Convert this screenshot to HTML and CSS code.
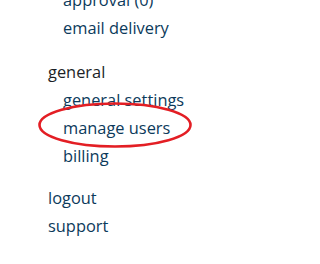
FILE: index.html
```html
<!DOCTYPE html>
<html>
<head>
<meta charset="utf-8">
<link rel="stylesheet" href="styles.css">
</head>
<body>
<nav class="menu">
  <ul class="sub">
    <li><a href="#">approval (0)</a></li>
    <li><a href="#">email delivery</a></li>
  </ul>
  <div class="section">
    <div class="heading">general</div>
    <ul class="sub">
      <li><a href="#">general settings</a></li>
      <li><a href="#">manage users</a></li>
      <li><a href="#">billing</a></li>
    </ul>
  </div>
  <ul class="top">
    <li><a href="#">logout</a></li>
    <li><a href="#">support</a></li>
  </ul>
</nav>
<svg class="circle" width="160" height="50" viewBox="0 0 160 50">
  <ellipse cx="78" cy="23" rx="75.5" ry="21.5" fill="none" stroke="#e31e24" stroke-width="2.6"/>
</svg>
</body>
</html>
```
FILE: styles.css
```css
html, body {
  margin: 0;
  padding: 0;
  background: #ffffff;
}
body {
  position: relative;
  width: 258px;
  height: 264px;
  overflow: hidden;
  font-family: "Open Sans", "Liberation Sans", sans-serif;
  font-size: 16.4px;
  font-weight: 500;
  line-height: 28px;
}
.menu {
  margin-top: -14px;
  padding-left: 48px;
}
ul {
  list-style: none;
  margin: 0;
  padding: 0;
}
.sub {
  padding-left: 15px;
}
a {
  color: #0c3a5b;
  text-decoration: none;
}
.section {
  margin-top: 16px;
}
.heading {
  color: #1c1f26;
}
.top {
  margin-top: 14px;
}
.circle {
  position: absolute;
  left: 37px;
  top: 102px;
}
```
